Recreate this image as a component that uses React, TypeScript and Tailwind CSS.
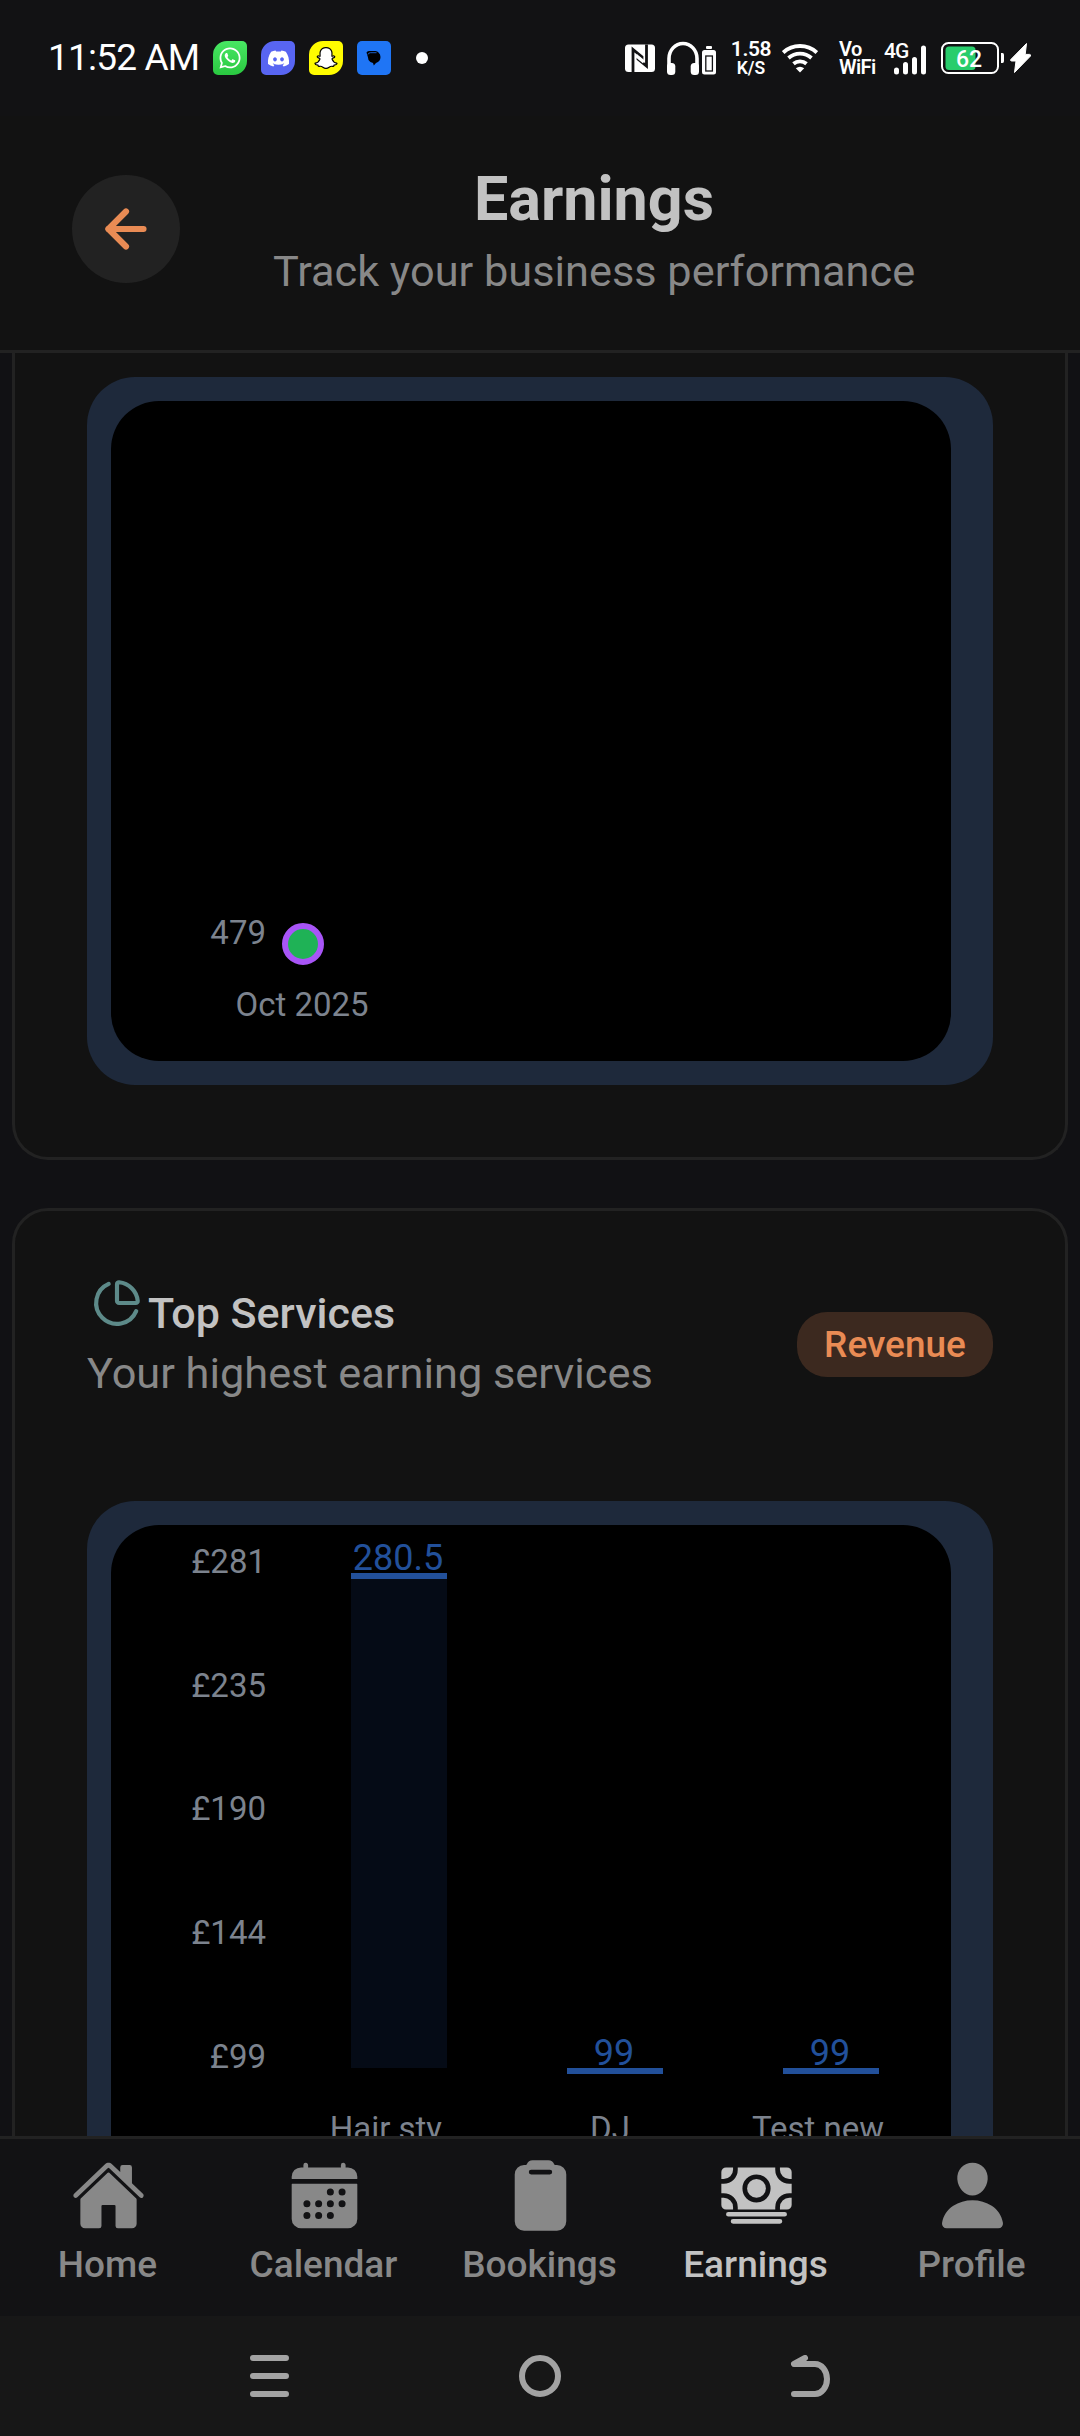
import { IoHome, IoCalendar, IoClipboard, IoCash, IoPerson } from 'react-icons/io5';
import { FaWhatsapp, FaDiscord, FaSnapchatGhost } from 'react-icons/fa';
import { ArrowLeft, ChartPie } from 'lucide-react';

const tabs = [
  { label: 'Home', Icon: IoHome, active: false },
  { label: 'Calendar', Icon: IoCalendar, active: false },
  { label: 'Bookings', Icon: IoClipboard, active: false },
  { label: 'Earnings', Icon: IoCash, active: true },
  { label: 'Profile', Icon: IoPerson, active: false },
];

const axisLabels = ['£281', '£235', '£190', '£144', '£99'];

const services = [
  { name: 'Hair sty...', value: 280.5 },
  { name: 'DJ\u00a0', value: 99 },
  { name: 'Test new...', value: 99 },
];
const MIN_VALUE = 99;
const MAX_VALUE = 280.5;
const PLOT_HEIGHT = 495;

function StatusBar() {
  return (
    <header className="flex h-[116px] shrink-0 items-center bg-[#121214] text-white">
      <div className="ml-[48px] w-[165px] whitespace-nowrap text-[37px] leading-[44px] tracking-[-0.8px]">11:52 AM</div>
      <div className="flex items-center gap-[14px]">
        <div className="flex size-[34px] items-center justify-center rounded-[5px] rounded-tl-[14px] rounded-br-[14px] bg-linear-to-b from-[#48e763] to-[#29c840]">
          <FaWhatsapp className="size-[24px]" />
        </div>
        <div className="flex size-[34px] items-center justify-center rounded-[5px] rounded-tl-[14px] rounded-br-[14px] bg-[#5865f2]">
          <FaDiscord className="size-[23px]" />
        </div>
        <div className="flex size-[34px] items-center justify-center rounded-[5px] rounded-tl-[14px] rounded-br-[14px] bg-[#fffc00]">
          <FaSnapchatGhost className="size-[22px] overflow-visible" stroke="#000" strokeWidth="28" />
        </div>
        <div className="flex size-[34px] items-center justify-center rounded-[5px] bg-[#1f75f5]">
          <svg viewBox="0 0 34 34" className="size-[34px]">
            <path d="M9.500 11.500q.5-1.500 2.500-1.500h6.500q2 0 3 1.500 2 1.500 2 4.500 0 4.500-4.500 6l-2.200 2.500-.8-2.500q-3-.5-4.500-3-.5-3-2-7.500z" fill="#000" />
            <path d="M11 13.500q.5-1.800 2.500-1.800h6" fill="none" stroke="#1f75f5" strokeWidth=".8" />
          </svg>
        </div>
      </div>
      <div className="ml-[25px] size-[12px] rounded-full bg-white" />

      {/* NFC */}
      <svg className="ml-[197px] h-[34px] w-[30px]" viewBox="0 0 30 34">
        <rect y="3.500" width="30" height="27.500" rx="3.500" fill="#fff" />
        <path d="M8 31V8.500L17 16V20.500M21.500 3.500V25L13 18V14" fill="none" stroke="#121214" strokeWidth="2.800" />
        <path d="M11 14.500l8 6.500" stroke="#fff" strokeWidth="3.500" />
      </svg>

      {/* Headphones with their battery level */}
      <svg className="ml-[12px] h-[34px] w-[50px]" viewBox="0 0 50 34">
        <path d="M2 26V17.500a14 15 0 0 1 28 0V26" fill="none" stroke="#fff" strokeWidth="3.600" />
        <rect x="0" y="22" width="8.300" height="12" rx="3.500" fill="#fff" />
        <rect x="23.700" y="22" width="8.300" height="12" rx="3.500" fill="#fff" />
        <rect x="39" y="5" width="6" height="3" rx="1" fill="#fff" />
        <rect x="35" y="9" width="14" height="24.500" rx="2.500" fill="#fff" />
        <rect x="38.800" y="15" width="6.600" height="15" fill="none" stroke="#121214" strokeWidth="1.300" />
      </svg>

      <div className="ml-[13px] flex w-[42px] flex-col items-center font-semibold">
        <span className="text-[21px] leading-[20px] tracking-[-0.4px]">1.58</span>
        <span className="text-[17.500px] leading-[18px]">K/S</span>
      </div>

      {/* Wi-Fi */}
      <svg className="ml-[10px] h-[34px] w-[36px]" viewBox="0 0 36 34">
        <g fill="none" stroke="#fff" strokeWidth="3.800">
          <path d="M1.200 11.500a25 25 0 0 1 33.600 0" />
          <path d="M6.500 17a17.500 17.500 0 0 1 23 0" />
          <path d="M11.500 22.700a10 10 0 0 1 13 0" />
        </g>
        <path d="M13.800 27.300q4.200-3.200 8.400 0L18 31.500z" fill="#fff" />
      </svg>

      <div className="ml-[21px] flex w-[38px] flex-col font-semibold">
        <span className="text-[20px] leading-[18px] tracking-[-0.6px]">Vo</span>
        <span className="text-[20px] leading-[19px] tracking-[-0.6px]">WiFi</span>
      </div>

      {/* Mobile signal */}
      <svg className="ml-[7px] h-[34px] w-[44px]" viewBox="0 0 44 34">
        <text x="0" y="16.500" fill="#fff" className="text-[21px] font-medium tracking-[-1px]">4G</text>
        <g stroke="#fff" strokeWidth="5" strokeLinecap="round">
          <path d="M12.500 29v2M21.500 23.500V31M30.500 18.500V31M39.500 7V31" />
        </g>
      </svg>

      {/* Battery */}
      <svg className="ml-[13px] h-[34px] w-[64px]" viewBox="0 0 64 34">
        <rect x="1" y="2" width="56" height="30" rx="6.500" fill="none" stroke="#fff" strokeWidth="2" />
        <rect x="4.500" y="5.500" width="30" height="23.500" rx="3.500" fill="#28cd6c" />
        <path d="M60 12h1.500q1.500 0 1.500 2v6q0 2-1.500 2H60z" fill="#fff" />
        <text x="28" y="26" textAnchor="middle" fill="#fff" className="text-[23px] font-medium">62</text>
      </svg>
      <svg className="ml-[5px] h-[34px] w-[21px]" viewBox="0 0 21 34">
        <path d="M16.500 2.500L.8 18.500q-.8 1.200.8 1.500H6L4.500 31.500 20.500 15q.8-1.200-.8-1.600H15.200z" fill="#fff" stroke="#fff" strokeLinejoin="round" />
      </svg>
    </header>
  );
}

function PageHeader() {
  return (
    <div className="flex h-[237px] shrink-0 items-start border-b-[3px] border-[#222] bg-[#121212] px-[72px] pt-[47px]">
      <div className="mt-[12px] flex size-[108px] items-center justify-center rounded-full bg-[#222]">
        <ArrowLeft size={60} strokeWidth={2.45} className="text-[#e98b54]" />
      </div>
      <div className="flex flex-1 flex-col items-center gap-[11px]">
        <h1 className="text-[61px] font-bold leading-[72px] text-[#c2c2c2]">Earnings</h1>
        <p className="text-[43.300px] leading-[52px] text-[#888]">Track your business performance</p>
      </div>
    </div>
  );
}

function TrendCard() {
  return (
    <section className="mx-[12px] shrink-0 rounded-b-[36px] border-x-[3px] border-b-[3px] border-[#222] bg-[#121212] px-[72px] pb-[72px] pt-[24px]">
      <div className="h-[708px] rounded-[48px] bg-[#1e293b] p-[24px]">
        <div className="relative h-[660px] w-[840px] rounded-[48px] bg-black text-[33px] leading-[40px] text-[#7c838e]">
          <span className="absolute left-[55px] top-[512px] w-[100px] text-right">479</span>
          <span className="absolute left-[171px] top-[522px] size-[42px] rounded-full border-[6px] border-[#a855f7] bg-[#1fb256]" />
          <span className="absolute left-[91px] top-[584px] w-[200px] text-center">Oct 2025</span>
        </div>
      </div>
    </section>
  );
}

function ServicesCard() {
  return (
    <section className="mx-[12px] mt-[48px] shrink-0 rounded-[36px] border-[3px] border-[#222] bg-[#121212] px-[72px] pb-[72px] pt-[67px]">
      <div className="flex h-[223px] items-start justify-between">
        <div>
          <div className="flex items-baseline">
            <ChartPie size={50} className="ml-[5px] text-[#5d8a89]" />
            <h2 className="ml-[6px] text-[43px] font-medium leading-[50px] text-[#c2c2c2]">Top Services</h2>
          </div>
          <p className="mt-[9px] text-[43.300px] leading-[54px] text-[#888]">Your highest earning services</p>
        </div>
        <span className="mt-[34px] flex h-[65px] w-[196px] items-center justify-center rounded-[30px] bg-[#3c291f] text-[37px] font-medium text-[#e98b54]">
          Revenue
        </span>
      </div>

      <div className="h-[708px] rounded-[48px] bg-[#1e293b] p-[24px]">
        <div className="flex h-[660px] w-[840px] rounded-[48px] bg-black">
          <div className="flex w-[155px] flex-col items-end pt-[17px] text-[33px] leading-[40px] text-[#7c838e]">
            {axisLabels.map((label) => (
              <span key={label} className="h-[123.7px]">{label}</span>
            ))}
          </div>
          <div className="ml-[25px] flex">
            {services.map((s) => (
              <div key={s.name} className="flex w-[216px] flex-col items-center">
                <div className="flex h-[543px] flex-col items-center justify-end">
                  <span className="mr-[2px] h-[36px] text-[36px] leading-[42px] text-[#22509a]">{s.value}</span>
                  <div
                    className="w-[96px] bg-[#050b16]"
                    style={{ height: ((s.value - MIN_VALUE) / (MAX_VALUE - MIN_VALUE)) * PLOT_HEIGHT }}
                  >
                    <div className="h-[6px] bg-[#22509a]" />
                  </div>
                </div>
                <span className="mr-[2px] mt-[41px] text-[33px] leading-[40px] text-[#7c838e]">{s.name}</span>
              </div>
            ))}
          </div>
        </div>
      </div>
    </section>
  );
}

function TabBar() {
  return (
    <nav className="grid h-[180px] shrink-0 grid-cols-5 border-t-[3px] border-[#222] bg-[#121214] pt-[19px]">
      {tabs.map(({ label, Icon, active }) => (
        <div key={label} className={active ? 'flex flex-col items-center text-[#c2c2c2]' : 'flex flex-col items-center text-[#888]'}>
          <Icon className="size-[75px]" />
          <span className="mr-[1px] mt-[10px] text-[37px] font-medium leading-[44px]">{label}</span>
        </div>
      ))}
    </nav>
  );
}

function SystemNav() {
  return (
    <div className="flex h-[120px] shrink-0 items-center justify-center gap-[228px] bg-[#171717] text-[#a3a3a3]">
      <svg viewBox="0 0 42 42" className="size-[42px]" fill="none" stroke="currentColor" strokeWidth="6" strokeLinecap="round">
        <path d="M4 3h33M4 21h33M4 39h33" />
      </svg>
      <svg viewBox="0 0 42 42" className="size-[42px]" fill="none" stroke="currentColor" strokeWidth="6">
        <circle cx="21" cy="21" r="18" />
      </svg>
      <svg viewBox="0 0 42 42" className="size-[42px]" fill="none" stroke="currentColor" strokeWidth="6" strokeLinecap="round" strokeLinejoin="round">
        <path d="M16 3L5 9h21a12 15 0 0 1 0 30H5" />
      </svg>
    </div>
  );
}

export default function App() {
  return (
    <div className="flex h-[2436px] w-[1080px] flex-col overflow-hidden bg-[#111114] font-['Roboto',sans-serif]">
      <StatusBar />
      <PageHeader />
      <main className="flex min-h-0 flex-1 flex-col overflow-hidden">
        <TrendCard />
        <ServicesCard />
      </main>
      <TabBar />
      <SystemNav />
    </div>
  );
}
